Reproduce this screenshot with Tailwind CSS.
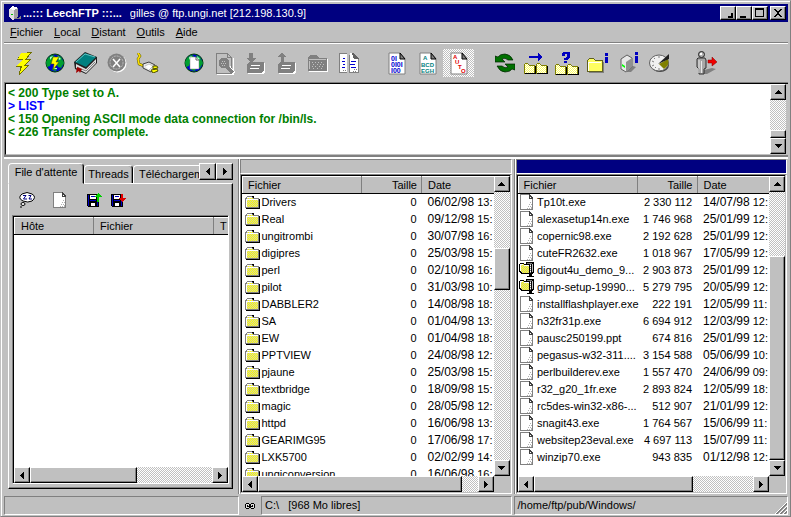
<!DOCTYPE html>
<html lang="fr">
<head>
    <meta charset="UTF-8">
    <meta name="viewport" content="width=device-width, initial-scale=1.0">
    <title>...::: LeechFTP :::...</title>
    <!-- Tailwind CSS CDN -->
    <script src="https://cdn.jsdelivr.net/npm/@tailwindcss/browser@4"></script>
</head>
<body class="h-screen overflow-hidden bg-[#c0c0c0] font-['Liberation_Sans',Arial,sans-serif] text-[11px] leading-[13px] text-black">

    <!-- Shared icons -->
    <svg class="absolute size-0" aria-hidden="true">
        <defs>
            <pattern id="yellow" width="2" height="2" patternUnits="userSpaceOnUse">
                <rect width="2" height="2" fill="#ffff00"/><path d="M1 0h1v1H1zM0 1h1v1H0z" fill="#d0d0b0"/>
            </pattern>
            <pattern id="pale" width="2" height="2" patternUnits="userSpaceOnUse">
                <rect width="2" height="2" fill="#ffff60"/><path d="M0 0h1v1H0zM1 1h1v1H1z" fill="#fff"/>
            </pattern>
        </defs>
        <symbol id="folder" viewBox="0 0 16 16">
            <path d="M1 14V4l2-2h5l2 2h5v10z" fill="#808080"/>
            <path d="M2 13V5l1-1h5l1 1h5v8z" fill="url(#yellow)"/>
            <path d="M2 13V5h1V3h5v1H3v1h11v1H3v7z" fill="#fff"/>
            <path d="M2 14h13V5h1v10H2z" fill="#000"/>
            <path d="M8 2h1l1 1v1H9z" fill="#000"/>
        </symbol>
        <symbol id="file" viewBox="0 0 16 16">
            <path d="M1 0h10l3 4v12H1z" fill="#808080"/>
            <path d="M2 1h8v4h3v10H2z" fill="#fff"/>
            <path d="M10 0l4 4v1h-4z" fill="#404040"/><path d="M11 3h1v1h-1z" fill="#fff"/>
            <path d="M11 8h1v1h-1zM10 10h1v1h-1zM12 10h1v1h-1zM9 12h1v1H9zM11 12h1v1h-1zM8 14h1v1H8zM10 14h1v1h-1zM12 13h1v2h-1z" fill="#b0b0b0"/>
        </symbol>
        <symbol id="zip" viewBox="0 0 16 16">
            <path d="M7 0h7l1 1v10l-2 1v2h2v1H8v-1h2v-2H7z" fill="#000"/>
            <path d="M8 1h5v1H8zM11 2h1v9h-1z" fill="#808080"/><path d="M13 2h1v8h-1z" fill="#c0c0c0"/>
            <path d="M11 3h1v1h-1zM11 5h1v1h-1zM11 7h1v1h-1zM11 9h1v1h-1z" fill="#fff"/>
            <path d="M0 2l1-1h3l1 1h5l1 1v9H3l-3-2z" fill="#000"/>
            <path d="M1 9V2h3l1 1h5v8H4z" fill="url(#yellow)"/>
            <path d="M1 2h3v1H2v7L1 9zM5 3h5v1H5z" fill="#fff"/>
        </symbol>
        <symbol id="globe" viewBox="0 0 20 20">
            <circle cx="10" cy="10" r="9" fill="#0000d0" stroke="#004000" stroke-width="1"/>
            <path d="M3 5l4-3 3 1-2 3 1 3-3 1-1 3-3 1-1-5zM12 2l4 2 3 6-3 5-3-1-2-4 2-3zM8 14l4 1-1 3-4-1z" fill="#00a030"/>
            <path d="M5 4l3-1-3 4zM13 3l3 3-2 1zM9 15h3v1H9z" fill="#b0ffd0"/>
        </symbol>
        <symbol id="bigfolder" viewBox="0 0 12 11">
            <path d="M0 2l1-2h3l1 2h6v9H0z" fill="#808000"/>
            <path d="M1 3V1h3l1 2h5v7H1z" fill="url(#pale)"/>
            <path d="M11 3h1v8H1v-1h10z" fill="#000"/>
        </symbol>
        <symbol id="sheet" viewBox="0 0 18 23">
            <path d="M1 1h11l5 6v15H1z" fill="#fff" stroke="#808080"/>
            <path d="M12 1l5 6h-5z" fill="#808080" stroke="#000"/>
        </symbol>
        <symbol id="up" viewBox="0 0 7 4"><path d="M3 0h1v1h1v1h1v1h1v1H0V3h1V2h1V1h1z"/></symbol>
        <symbol id="down" viewBox="0 0 7 4"><path d="M0 0h7v1H6v1H5v1H4v1H3V3H2V2H1V1H0z"/></symbol>
        <symbol id="left" viewBox="0 0 4 7"><path d="M4 0v7H3V6H2V5H1V4H0V3h1V2h1V1h1V0z"/></symbol>
        <symbol id="right" viewBox="0 0 4 7"><path d="M0 0h1v1h1v1h1v1h1v1H3v1H2v1H1v1H0z"/></symbol>
    </svg>

    <div class="flex h-full flex-col border border-[#c0c0c0] border-r-[#808080] border-b-[#808080] px-[2px] pb-px shadow-[inset_1px_1px_0_#fff]">

        <!-- Title bar -->
        <header class="mt-[3px] ml-px flex h-[18px] shrink-0 items-center bg-[#000080] px-[2px] text-white">
            <svg class="mr-[2px] ml-[2px] h-[14px] w-[13px]" viewBox="0 0 13 14" shape-rendering="crispEdges">
                <path d="M5 12h5l3-2v3H7z" fill="#808080"/>
                <path d="M1 3l4-3 5 2v9l-5 3-4-3z" fill="#e0e0e0"/>
                <path d="M6 4l4-2v9l-4 2z" fill="#a0a0a0"/><path d="M1 3l4-3 5 2-4 2z" fill="#fff"/>
                <path d="M3 8h2v1H3z" fill="#00c000"/>
            </svg>
            <h1 class="font-bold whitespace-pre">...::: LeechFTP :::...</h1>
            <span class="ml-2 flex-1 truncate">gilles @ ftp.ungi.net [212.198.130.9]</span>
            <button aria-label="Réduire dans la barre" class="flex h-[14px] w-4 items-center justify-center border border-white border-r-black border-b-black bg-[#c0c0c0] shadow-[inset_-1px_-1px_0_#808080]">
                <svg class="size-[10px]" viewBox="0 0 10 10"><path d="M8 5h2v5H5V8h3z"/></svg>
            </button>
            <button aria-label="Réduire" class="flex h-[14px] w-4 items-center justify-center border border-white border-r-black border-b-black bg-[#c0c0c0] shadow-[inset_-1px_-1px_0_#808080]">
                <svg class="size-[10px]" viewBox="0 0 10 10"><path d="M1 8h6v2H1z"/></svg>
            </button>
            <button aria-label="Agrandir" class="flex h-[14px] w-4 items-center justify-center border border-white border-r-black border-b-black bg-[#c0c0c0] shadow-[inset_-1px_-1px_0_#808080]">
                <svg class="size-[10px]" viewBox="0 0 10 10"><path d="M0 0h9v9H0zM1 2v6h7V2z" fill-rule="evenodd"/></svg>
            </button>
            <button aria-label="Fermer" class="ml-[2px] flex h-[14px] w-4 items-center justify-center border border-white border-r-black border-b-black bg-[#c0c0c0] shadow-[inset_-1px_-1px_0_#808080]">
                <svg class="size-[10px]" viewBox="0 0 10 10" shape-rendering="crispEdges"><path d="M1 1h2v1h1v1h2V2h1V1h2v1H8v1H7v1H6v2h1v1h1v1h1v1H7V8H6V7H4v1H3v1H1V8h1V7h1V6h1V4H3V3H2V2H1z"/></svg>
            </button>
        </header>

        <!-- Menu -->
        <nav class="ml-px flex h-5 shrink-0 items-center gap-px pl-px">
            <button class="px-[5px]"><u>F</u>ichier</button>
            <button class="px-[5px]"><u>L</u>ocal</button>
            <button class="px-[5px]"><u>D</u>istant</button>
            <button class="px-[5px]"><u>O</u>utils</button>
            <button class="px-[5px]"><u>A</u>ide</button>
        </nav>

        <!-- Toolbar -->
        <div role="toolbar" class="ml-px flex h-10 shrink-0 items-center gap-[15px] border-t border-[#808080] pt-px pl-1 shadow-[inset_0_1px_0_#fff]">
            <div class="flex">
                <button aria-label="Connexion rapide" class="flex h-7 w-[31px] items-center justify-center">
                    <svg class="h-6 w-[18px]" viewBox="0 0 18 24" shape-rendering="crispEdges">
                        <path d="M6 2L17 1l-5 7h4l-6 6h4L4 24l1-8H1l6-7H2z" fill="#707000"/>
                        <path d="M6 2h9l-5 7h4l-6 6h4l-7 7 2-7H2l6-7H3z" fill="#ffff00"/>
                    </svg>
                </button>
                <button aria-label="Connexion" class="flex h-7 w-[31px] items-center justify-center">
                    <svg class="size-5" viewBox="0 0 20 20"><use href="#globe"/>
                        <path d="M8 4h6l-3 5h3l-6 8 1-6H6z" fill="#ffff00" stroke="#404000" stroke-width=".5"/>
                    </svg>
                </button>
                <button aria-label="Signets" class="flex h-7 w-[31px] items-center justify-center">
                    <svg class="size-6" viewBox="0 0 24 24">
                        <path d="M0 11L11 1l12 5v6L12 23 1 18z" fill="#202020"/>
                        <path d="M2 13l10 5 10-10v4L12 22 2 17z" fill="#e0e0e0"/><path d="M3 16l9 4 9-9" stroke="#808080" fill="none"/>
                        <path d="M1 11L11 2l11 4-10 10z" fill="#008080"/>
                        <path d="M2 11L11 3l10 3" stroke="#60c0c0" fill="none"/>
                        <path d="M3 16l5 2-2 4-1-2-3 2z" fill="#a00000"/>
                    </svg>
                </button>
                <button aria-label="Annuler" disabled class="flex h-7 w-[31px] items-center justify-center">
                    <svg class="size-5" viewBox="0 0 20 20">
                        <circle cx="10.500" cy="10.500" r="9" fill="#fff"/><circle cx="9.500" cy="9.500" r="9" fill="#808080"/>
                        <circle cx="9.500" cy="9.500" r="6.500" fill="none" stroke="#c0c0c0" stroke-dasharray="2 1"/>
                        <path d="M6 6l7 8M13 6l-7 8" stroke="#fff" stroke-width="1.500"/>
                    </svg>
                </button>
                <button aria-label="Déconnexion" class="flex h-7 w-[31px] items-center justify-center">
                    <svg class="h-5 w-6" viewBox="0 0 24 20">
                        <path d="M2 0l2 3-2 3 1 5 5 2" stroke="#606000" stroke-width="2.500" fill="none"/>
                        <path d="M2 0l2 3-2 3 1 5 5 2" stroke="#ffe000" stroke-width="1.500" fill="none"/>
                        <path d="M7 11l6-2 6 3v4l-4 3-8-4z" fill="#e8e8e8" stroke="#404040"/>
                        <path d="M9 13l4-2 4 2-4 4" fill="#fff" stroke="#909090" stroke-width=".5"/>
                        <path d="M17 13l4 0 1 2-5 1zM15 17l6-1 1 2-5 2z" fill="#ffff00" stroke="#505000"/>
                    </svg>
                </button>
            </div>
            <div class="flex">
                <button aria-label="Ouvrir une adresse" class="flex h-7 w-[31px] items-center justify-center">
                    <svg class="size-5" viewBox="0 0 20 20"><use href="#globe"/>
                        <path d="M6 4h6l3 3v9H6z" fill="#fff" stroke="#808080" stroke-width=".5"/><path d="M12 4v3h3" fill="none" stroke="#606060"/>
                    </svg>
                </button>
                <button aria-label="Voir" disabled class="flex h-7 w-[31px] items-center justify-center">
                    <svg class="h-[23px] w-5" viewBox="0 0 20 23" shape-rendering="crispEdges">
                        <path d="M18 6v16H2" fill="none" stroke="#fff"/><path d="M1 1h11l4 4v16H1z" fill="none" stroke="#808080"/>
                        <path d="M12 1v4h4" fill="none" stroke="#808080"/>
                        <circle cx="9" cy="11" r="5.500" fill="#808080"/><path d="M7 9h1v1H7zM9 9h1v1H9zM6 11h1v1H6zM8 11h1v1H8zM10 11h1v1h-1zM7 13h1v1H7zM9 13h1v1H9z" fill="#c0c0c0"/>
                        <path d="M14 15l5 6" stroke="#fff" stroke-width="3"/><path d="M12 15l6 6" stroke="#808080" stroke-width="3"/>
                    </svg>
                </button>
                <button aria-label="Télécharger" disabled class="flex h-7 w-[31px] items-center justify-center">
                    <svg class="h-[22px] w-5" viewBox="0 0 20 22" shape-rendering="crispEdges">
                        <path d="M2 14l3-3h14v9l-2 2H2z" fill="#fff"/>
                        <path d="M3 1h4v5h3l-5 5-5-5h3zM1 12l3-2h14v8l-3 3H1z" fill="#808080"/>
                        <path d="M5 13h9v1H5zM4 16h9v1H4z" fill="#fff"/>
                    </svg>
                </button>
                <button aria-label="Envoyer" disabled class="flex h-7 w-[31px] items-center justify-center">
                    <svg class="h-[22px] w-5" viewBox="0 0 20 22" shape-rendering="crispEdges">
                        <path d="M2 14l3-3h14v9l-2 2H2z" fill="#fff"/>
                        <path d="M5 0l4 5H7v6H4V5H1zM1 12l3-2h14v8l-3 3H1z" fill="#808080"/>
                        <path d="M5 13h9v1H5zM4 16h9v1H4z" fill="#fff"/>
                    </svg>
                </button>
                <button aria-label="Nouveau dossier" disabled class="flex h-7 w-[31px] items-center justify-center">
                    <svg class="h-[18px] w-[22px]" viewBox="0 0 22 18" shape-rendering="crispEdges">
                        <path d="M2 5h19v13H2z" fill="#fff"/><path d="M1 4l2-3h7l2 3h8v13H1z" fill="#808080"/>
                        <path d="M2 5h17v1H2zM2 15V7h1v8z" fill="#c0c0c0"/>
                        <path d="M5 8h1v1H5zM8 8h1v1H8zM11 8h1v1h-1zM14 8h1v1h-1zM6 10h1v1H6zM10 10h1v1h-1zM13 10h1v1h-1zM16 10h1v1h-1zM5 12h1v1H5zM8 12h1v1H8zM12 12h1v1h-1zM15 12h1v1h-1zM6 14h1v1H6zM10 14h1v1h-1zM14 14h1v1h-1z" fill="#c0c0c0"/>
                    </svg>
                </button>
                <button aria-label="Comparer" class="flex h-7 w-[31px] items-center justify-center">
                    <svg class="h-[22px] w-5" viewBox="0 0 20 22" shape-rendering="crispEdges">
                        <path d="M0 1h8v20H0z" fill="#fff"/><path d="M0 1h8v1H0zM0 1h1v20H0zM0 20h8v1H0z" fill="#808080"/>
                        <path d="M11 1h4l5 6v14h-9z" fill="#fff"/><path d="M10 3h1v18h-1zM19 7h1v14h-1zM11 20h8v1h-8z" fill="#808080"/>
                        <path d="M13 1h2l5 6h-5z" fill="#606060"/>
                        <path d="M4 6h2v1H4zM3 9h3v1H3zM4 12h2v1H4zM3 15h3v1H3zM12 9h5v1h-5zM11 12h5v1h-5zM12 15h5v1h-5z" fill="#0000d0"/>
                        <path d="M15 17h1v1h-1zM17 17h1v1h-1zM14 19h1v1h-1zM16 19h1v1h-1zM4 18h1v1H4zM6 18h1v1H6z" fill="#808080"/>
                    </svg>
                </button>
            </div>
            <div class="flex pl-[2px]">
                <button aria-label="Mode binaire" class="flex h-7 w-[31px] items-center justify-center">
                    <svg class="h-[23px] w-[18px]" viewBox="0 0 18 23"><use href="#sheet"/>
                        <g fill="#0000d0" font-size="7" font-weight="bold"><text x="3" y="9">0I</text><text x="3" y="15">0I0I</text><text x="3" y="21">I00</text></g>
                    </svg>
                </button>
                <button aria-label="Mode texte" class="flex h-7 w-[31px] items-center justify-center">
                    <svg class="h-[23px] w-[18px]" viewBox="0 0 18 23"><use href="#sheet"/>
                        <g fill="#008080" font-size="6" font-weight="bold"><text x="4" y="8">A</text><text x="2" y="15">BCD</text><text x="2" y="21">EGH</text></g>
                    </svg>
                </button>
                <button aria-label="Mode automatique" aria-pressed="true" class="flex h-7 w-[31px] items-center justify-center bg-[repeating-conic-gradient(#fff_0_25%,#c0c0c0_0_50%)] bg-[length:2px_2px]">
                    <svg class="h-[23px] w-[18px]" viewBox="0 0 18 23"><use href="#sheet"/>
                        <g fill="#e00000" font-size="6" font-weight="bold"><text x="3" y="7">A</text><text x="5" y="12">U</text><text x="8" y="17">T</text><text x="11" y="21">O</text></g>
                    </svg>
                </button>
            </div>
            <div class="flex">
                <button aria-label="Actualiser" class="flex h-7 w-[31px] items-center justify-center">
                    <svg class="size-5" viewBox="0 0 20 20">
                        <path d="M0 3l3 1q2-3 7-3 5 0 8 6h-5q-3-3-6-1l3 3H0zM20 17l-3-1q-2 3-7 3-5 0-8-6h5q3 3 6 1l-3-3h10z" fill="#007000" stroke="#002000" stroke-width=".7"/>
                    </svg>
                </button>
                <button aria-label="Transférer le dossier" class="flex h-7 w-[31px] items-center justify-center">
                    <svg class="h-[22px] w-6" viewBox="0 0 24 22" shape-rendering="crispEdges">
                        <path d="M5 4h9V1l5 4-5 4V6H5z" fill="#0000c0"/>
                        <use href="#bigfolder" x="0" y="11" width="12" height="11"/><use href="#bigfolder" x="12" y="11" width="12" height="11"/>
                    </svg>
                </button>
                <button aria-label="Comparer les dossiers" class="flex h-7 w-[31px] items-center justify-center">
                    <svg class="h-[23px] w-6" viewBox="0 0 24 23" shape-rendering="crispEdges">
                        <path d="M8 0h6l1 1v4l-3 3H9V6h2l1-2V2h-2v2H7V1zM9 9h3v2H9z" fill="#0000c0"/>
                        <use href="#bigfolder" x="0" y="12" width="12" height="11"/><use href="#bigfolder" x="12" y="12" width="12" height="11"/>
                    </svg>
                </button>
                <button aria-label="Infos dossier" class="flex h-7 w-[31px] items-center justify-center">
                    <svg class="h-5 w-[22px]" viewBox="0 0 22 20" shape-rendering="crispEdges">
                        <path d="M2 18h14V9h1v11H2z" fill="#808080"/>
                        <path d="M0 7l2-2h4l2 2h8v12H0z" fill="#606020"/><path d="M1 8V7l1-1h4l2 2h7v10H1z" fill="#ffff60"/>
                        <path d="M1 9h13v1H2v8H1z" fill="#fff"/>
                        <path d="M18 0h3v3h-3zM18 4h3v6h-3z" fill="#0000c0"/>
                    </svg>
                </button>
                <button aria-label="Infos serveur" class="flex h-7 w-[31px] items-center justify-center">
                    <svg class="h-[22px] w-5" viewBox="0 0 20 22">
                        <path d="M6 19l8-5 3 1-5 5H7z" fill="#808080"/>
                        <path d="M2 7l6-4 5 3v9l-6 5-5-3z" fill="#e8e8e8" stroke="#606060"/><path d="M7 10l6-4v9l-6 5z" fill="#909090"/>
                        <path d="M3 12l3 2v2l-3-2z" fill="#00ff00"/><path d="M16 0h3v3h-3zM16 4h3v7h-3z" fill="#0000c0"/>
                    </svg>
                </button>
                <button aria-label="Vitesse" class="flex h-7 w-[31px] items-center justify-center">
                    <svg class="h-5 w-[22px]" viewBox="0 0 22 20">
                        <ellipse cx="11" cy="12" rx="9" ry="7" fill="#404040"/>
                        <ellipse cx="10" cy="10" rx="9.500" ry="8" fill="#f0f0f0" stroke="#606060"/>
                        <path d="M10 11l9-5q2 6-4 10z" fill="#808000"/><path d="M9 11L20 1v5z" fill="#202020"/>
                        <path d="M10 3v2M3 8l2 1M3 13l2-1M5 5l1 1M10 15v2M6 15l1-1" stroke="#808080"/>
                    </svg>
                </button>
            </div>
            <button aria-label="Quitter" class="flex h-7 w-[31px] items-center justify-center">
                <svg class="h-6 w-6" viewBox="0 0 24 24">
                    <path d="M10 19l8-2 4 1-9 5H9z" fill="#808080"/>
                    <path d="M4 7h7l1 2v8l-2 1v5H5v-5l-2-2V8z" fill="#a8a8a8" stroke="#303030"/>
                    <path d="M5 9v13M7.500 10v12" stroke="#e8e8e8"/><circle cx="7.500" cy="3.500" r="3" fill="#b0b0b0" stroke="#202020"/><path d="M6 2h2v2H6z" fill="#fff"/>
                    <path d="M14 9h4V6l5 5-5 4v-3h-4z" fill="#f00000" stroke="#800000" stroke-width=".5"/>
                </svg>
            </button>
        </div>

        <!-- Server log -->
        <section class="ml-px flex h-[73px] shrink-0 border-t border-l border-[#808080] border-b-white">
            <div class="flex flex-1 border-t border-b border-l border-black border-b-[#c0c0c0]">
                <div role="log" class="flex-1 bg-white pt-[3px] pl-[2px] text-[12px] leading-[13px] font-bold text-[#008000]">
                    <p>&lt; 200 Type set to A.</p>
                    <p class="text-[#0000ff]">&gt; LIST</p>
                    <p>&lt; 150 Opening ASCII mode data connection for /bin/ls.</p>
                    <p>&lt; 226 Transfer complete.</p>
                </div>
                <div class="mr-[2px] flex w-4 flex-col bg-[repeating-conic-gradient(#fff_0_25%,#c0c0c0_0_50%)] bg-[length:2px_2px]">
                    <button aria-label="Haut" class="flex h-4 shrink-0 items-center justify-center border border-white border-r-black border-b-black bg-[#c0c0c0] shadow-[inset_-1px_-1px_0_#808080]"><svg class="h-1 w-[7px]"><use href="#up"/></svg></button>
                    <div class="mt-auto h-2 border border-white border-r-black border-b-black bg-[#c0c0c0] shadow-[inset_-1px_-1px_0_#808080]"></div>
                    <button aria-label="Bas" class="flex h-4 shrink-0 items-center justify-center border border-white border-r-black border-b-black bg-[#c0c0c0] shadow-[inset_-1px_-1px_0_#808080]"><svg class="h-1 w-[7px]"><use href="#down"/></svg></button>
                </div>
            </div>
        </section>
        <div class="ml-px h-1 shrink-0 border-t-2 border-b-2 border-[#808080] border-b-white"></div>

        <!-- Three panes -->
        <main class="ml-px flex min-h-0 flex-1 pr-px">

            <!-- Queue -->
            <section class="flex w-[236px] shrink-0 flex-col border-r border-white pt-1 pr-[2px] pb-[5px] pl-1 shadow-[inset_-1px_0_0_#808080]">
                <div role="tablist" class="flex h-5 w-[225px] items-end">
                    <button role="tab" aria-selected="true" class="relative z-10 -mb-px h-[21px] w-[76px] shrink-0 rounded-t-sm border border-white border-r-black border-b-[#c0c0c0] bg-[#c0c0c0] pb-[2px] shadow-[inset_-1px_0_0_#808080]">File d'attente</button>
                    <button role="tab" class="h-[18px] w-[49px] shrink-0 rounded-t-sm border border-b-0 border-white border-r-black shadow-[inset_-1px_0_0_#808080]">Threads</button>
                    <button role="tab" class="h-[18px] min-w-0 flex-1 overflow-hidden rounded-tl-sm border-t border-l border-white pl-[5px] text-left whitespace-nowrap">Téléchargement</button>
                    <div class="flex self-start">
                        <button aria-label="Onglet précédent" class="flex h-[17px] w-[17px] items-center justify-center border border-white border-r-black border-b-black bg-[#c0c0c0] shadow-[inset_-1px_-1px_0_#808080]"><svg class="h-[7px] w-1"><use href="#left"/></svg></button>
                        <button aria-label="Onglet suivant" class="flex h-[17px] w-[17px] items-center justify-center border border-white border-r-black border-b-black bg-[#c0c0c0] shadow-[inset_-1px_-1px_0_#808080]"><svg class="h-[7px] w-1"><use href="#right"/></svg></button>
                    </div>
                </div>
                <div class="flex w-[225px] min-h-0 flex-1 flex-col border border-white border-r-black border-b-black px-[3px] pb-1 shadow-[inset_-1px_-1px_0_#808080]">
                    <div class="flex h-[31px] shrink-0 items-center pl-[7px]">
                        <button aria-label="Pause">
                            <svg class="size-4" viewBox="0 0 16 16">
                                <path d="M3 2q5-3 10 0 5 3 0 7-4 2-9 0-6-3-1-7z" fill="#fff" stroke="#000"/><ellipse cx="4" cy="12" rx="2" ry="1.500" fill="#fff" stroke="#000"/><path d="M1 15h2" stroke="#000"/>
                                <path d="M4 3.500h3L4.500 7H8M9.500 3.500H12L10 7h3" stroke="#000080" fill="none"/>
                            </svg>
                        </button>
                        <button aria-label="Vider" class="ml-[17px]"><svg class="size-4" shape-rendering="crispEdges"><use href="#file"/></svg></button>
                        <button aria-label="Charger la file" class="ml-[18px]">
                            <svg class="size-4" viewBox="0 0 16 16" shape-rendering="crispEdges"><path d="M1 2h12v13H2l-1-1z"/><path d="M2 3h1v11H2zM11 8h1v6h-1zM4 8h6v1H4z" fill="#0000c0"/><path d="M4 3h6v4H4zM5 11h4v3H5z" fill="#fff"/><path d="M5 4h4v1H5z" fill="#0000c0"/><path d="M12 1h1v1h1v1h1v1h1v1h-3v5h-2V5H9V4h1V3h1V2h1z" fill="#00d000"/></svg>
                        </button>
                        <button aria-label="Enregistrer la file" class="ml-2">
                            <svg class="size-4" viewBox="0 0 16 16" shape-rendering="crispEdges"><path d="M1 2h12v13H2l-1-1z"/><path d="M2 3h1v11H2zM11 9h1v5h-1zM4 8h6v1H4z" fill="#0000c0"/><path d="M4 3h6v4H4zM5 11h4v3H5z" fill="#fff"/><path d="M5 4h4v1H5z" fill="#0000c0"/><path d="M11 2h2v4h3v1h-1v1h-1v1h-1v1h-1V9h-1V8h-1V7H9V6h2z" fill="#e00000"/></svg>
                        </button>
                    </div>
                    <div class="flex min-h-0 flex-1 flex-col border border-[#808080] border-r-white border-b-white">
                        <div class="flex min-h-0 flex-1 flex-col border-t border-l border-black bg-white">
                            <table class="w-full table-fixed">
                                <thead>
                                    <tr class="h-[17px] bg-[#c0c0c0] text-left">
                                        <th class="w-[79px] border border-white border-r-[#808080] border-b-black p-0 pl-[6px] font-normal">Hôte</th>
                                        <th class="w-[120px] border border-white border-r-[#808080] border-b-black p-0 pl-[6px] font-normal">Fichier</th>
                                        <th class="overflow-hidden border border-r-0 border-white border-b-black p-0 pl-[6px] font-normal">T</th>
                                    </tr>
                                </thead>
                            </table>
                            <div class="mt-auto flex h-4 shrink-0 bg-[repeating-conic-gradient(#fff_0_25%,#c0c0c0_0_50%)] bg-[length:2px_2px]">
                                <button aria-label="Gauche" class="flex w-4 shrink-0 items-center justify-center border border-white border-r-black border-b-black bg-[#c0c0c0] shadow-[inset_-1px_-1px_0_#808080]"><svg class="h-[7px] w-1"><use href="#left"/></svg></button>
                                <div class="w-[107px] border border-white border-r-black border-b-black bg-[#c0c0c0] shadow-[inset_-1px_-1px_0_#808080]"></div>
                                <button aria-label="Droite" class="ml-auto flex w-4 shrink-0 items-center justify-center border border-white border-r-black border-b-black bg-[#c0c0c0] shadow-[inset_-1px_-1px_0_#808080]"><svg class="h-[7px] w-1"><use href="#right"/></svg></button>
                            </div>
                        </div>
                    </div>
                </div>
            </section>

            <!-- Local files -->
            <section class="flex min-w-0 flex-1 flex-col border-r border-[#808080] pr-[2px]">
                <div class="h-[15px] shrink-0 border border-[#808080] border-r-white border-b-white"></div>
                <div class="flex min-h-0 flex-1 flex-col border border-[#808080] border-r-white border-b-white pr-px pb-px">
                    <div class="flex min-h-0 flex-1 flex-col border-t border-l border-black">
                        <div class="flex min-h-0 flex-1">
                            <div class="min-w-0 flex-1 overflow-hidden bg-white">
                                <table class="w-full table-fixed">
                                    <thead>
                                        <tr class="h-[17px] bg-[#c0c0c0] text-left">
                                            <th class="w-[119px] border border-white border-r-[#808080] border-b-black p-0 pl-[5px] font-normal">Fichier</th>
                                            <th class="w-[60px] border border-white border-r-[#808080] border-b-black p-0 pr-1 text-right font-normal">Taille</th>
                                            <th class="border border-r-0 border-white border-b-black p-0 pl-[6px] font-normal">Date</th>
                                        </tr>
                                    </thead>
                                    <tbody id="local-files"></tbody>
                                </table>
                            </div>
                            <div class="flex w-4 shrink-0 flex-col bg-[repeating-conic-gradient(#fff_0_25%,#c0c0c0_0_50%)] bg-[length:2px_2px]">
                                <button aria-label="Haut" class="flex h-4 shrink-0 items-center justify-center border border-white border-r-black border-b-black bg-[#c0c0c0] shadow-[inset_-1px_-1px_0_#808080]"><svg class="h-1 w-[7px]"><use href="#up"/></svg></button>
                                <div class="mt-14 h-[42px] border border-white border-r-black border-b-black bg-[#c0c0c0] shadow-[inset_-1px_-1px_0_#808080]"></div>
                                <button aria-label="Bas" class="mt-auto flex h-4 shrink-0 items-center justify-center border border-white border-r-black border-b-black bg-[#c0c0c0] shadow-[inset_-1px_-1px_0_#808080]"><svg class="h-1 w-[7px]"><use href="#down"/></svg></button>
                            </div>
                        </div>
                        <div class="mr-4 flex h-4 shrink-0 bg-[repeating-conic-gradient(#fff_0_25%,#c0c0c0_0_50%)] bg-[length:2px_2px]">
                            <button aria-label="Gauche" class="flex w-4 shrink-0 items-center justify-center border border-white border-r-black border-b-black bg-[#c0c0c0] shadow-[inset_-1px_-1px_0_#808080]"><svg class="h-[7px] w-1"><use href="#left"/></svg></button>
                            <div class="mr-4 flex-1 border border-white border-r-black border-b-black bg-[#c0c0c0] shadow-[inset_-1px_-1px_0_#808080]"></div>
                            <button aria-label="Droite" class="flex w-4 shrink-0 items-center justify-center border border-white border-r-black border-b-black bg-[#c0c0c0] shadow-[inset_-1px_-1px_0_#808080]"><svg class="h-[7px] w-1"><use href="#right"/></svg></button>
                        </div>
                    </div>
                </div>
            </section>

            <!-- Remote files -->
            <section class="flex min-w-0 flex-1 flex-col border-l border-white">
                <div class="h-[15px] shrink-0 border border-[#808080] border-r-white border-b-white bg-[#000080]"></div>
                <div class="flex min-h-0 flex-1 flex-col border border-[#808080] border-r-white border-b-white pr-px pb-px">
                    <div class="flex min-h-0 flex-1 flex-col border-t border-l border-black">
                        <div class="flex min-h-0 flex-1">
                            <div class="min-w-0 flex-1 overflow-hidden bg-white">
                                <table class="w-full table-fixed">
                                    <thead>
                                        <tr class="h-[17px] bg-[#c0c0c0] text-left">
                                            <th class="w-[119px] border border-white border-r-[#808080] border-b-black p-0 pl-[5px] font-normal">Fichier</th>
                                            <th class="w-[60px] border border-white border-r-[#808080] border-b-black p-0 pr-1 text-right font-normal">Taille</th>
                                            <th class="border border-r-0 border-white border-b-black p-0 pl-[6px] font-normal">Date</th>
                                        </tr>
                                    </thead>
                                    <tbody id="remote-files"></tbody>
                                </table>
                            </div>
                            <div class="flex w-4 shrink-0 flex-col bg-[repeating-conic-gradient(#fff_0_25%,#c0c0c0_0_50%)] bg-[length:2px_2px]">
                                <button aria-label="Haut" class="flex h-4 shrink-0 items-center justify-center border border-white border-r-black border-b-black bg-[#c0c0c0] shadow-[inset_-1px_-1px_0_#808080]"><svg class="h-1 w-[7px]"><use href="#up"/></svg></button>
                                <div class="mt-16 flex-1 border border-white border-r-black border-b-black bg-[#c0c0c0] shadow-[inset_-1px_-1px_0_#808080]"></div>
                                <button aria-label="Bas" class="flex h-4 shrink-0 items-center justify-center border border-white border-r-black border-b-black bg-[#c0c0c0] shadow-[inset_-1px_-1px_0_#808080]"><svg class="h-1 w-[7px]"><use href="#down"/></svg></button>
                            </div>
                        </div>
                        <div class="mr-4 flex h-4 shrink-0 bg-[repeating-conic-gradient(#fff_0_25%,#c0c0c0_0_50%)] bg-[length:2px_2px]">
                            <button aria-label="Gauche" class="flex w-4 shrink-0 items-center justify-center border border-white border-r-black border-b-black bg-[#c0c0c0] shadow-[inset_-1px_-1px_0_#808080]"><svg class="h-[7px] w-1"><use href="#left"/></svg></button>
                            <div class="w-[159px] border border-white border-r-black border-b-black bg-[#c0c0c0] shadow-[inset_-1px_-1px_0_#808080]"></div>
                            <button aria-label="Droite" class="ml-auto flex w-4 shrink-0 items-center justify-center border border-white border-r-black border-b-black bg-[#c0c0c0] shadow-[inset_-1px_-1px_0_#808080]"><svg class="h-[7px] w-1"><use href="#right"/></svg></button>
                        </div>
                    </div>
                </div>
            </section>
        </main>

        <!-- Status bar -->
        <footer class="mt-[2px] ml-px flex h-[19px] shrink-0">
            <div class="w-[235px] shrink-0 border border-[#808080] border-r-white border-b-white"></div>
            <div class="flex min-w-0 flex-1 items-center">
                <svg class="mx-[6px] h-[6px] w-[10px] shrink-0" viewBox="0 0 10 6" shape-rendering="crispEdges"><path d="M1 0h3v1h2V0h3v1h1v4H9v1H6V5H4v1H1V5H0V1h1z"/><path d="M1 1h3v4H1zM6 1h3v4H6z" fill="#e0e0e0"/><path d="M2 2h1v2H2zM7 2h1v2H7zM3 3h4v1H3z"/></svg>
                <div class="mr-[2px] flex-1 self-stretch border border-[#808080] border-r-white border-b-white pt-[2px] pl-[3px] whitespace-pre">C:\   [968 Mo libres]</div>
            </div>
            <div class="flex min-w-0 flex-1">
                <div class="flex flex-1 justify-between border border-[#808080] border-r-white border-b-white pl-[3px]">
                    <span class="pt-[2px]">/home/ftp/pub/Windows/</span>
                    <svg class="size-3 self-end" viewBox="0 0 12 12"><path d="M0 12L12 0M4 12l8-8M8 12l4-4" stroke="#fff"/><path d="M1 12L12 1M2 12L12 2M5 12l7-7M6 12l6-6M9 12l3-3M10 12l2-2" stroke="#808080"/></svg>
                </div>
            </div>
        </footer>
    </div>

    <script>
        const localFiles = [
            ["Drivers", "06/02/98", "13:"],
            ["Real", "09/12/98", "15:"],
            ["ungitrombi", "30/07/98", "16:"],
            ["digipres", "25/03/98", "15:"],
            ["perl", "02/10/98", "16:"],
            ["pilot", "31/03/98", "10:"],
            ["DABBLER2", "14/08/98", "18:"],
            ["SA", "01/04/98", "13:"],
            ["EW", "01/04/98", "18:"],
            ["PPTVIEW", "24/08/98", "12:"],
            ["pjaune", "25/03/98", "15:"],
            ["textbridge", "18/09/98", "15:"],
            ["magic", "28/05/98", "12:"],
            ["httpd", "16/06/98", "13:"],
            ["GEARIMG95", "17/06/98", "17:"],
            ["LXK5700", "02/02/99", "14:"],
            ["ungiconversion", "16/06/98", "16:"]
        ].map(([name, date, time]) => ({ icon: "folder", name, size: "0", date, time }));

        const remoteFiles = [
            { icon: "file", name: "Tp10t.exe", size: "2 330 112", date: "14/07/98", time: "12:" },
            { icon: "file", name: "alexasetup14n.exe", size: "1 746 968", date: "25/01/99", time: "12:" },
            { icon: "file", name: "copernic98.exe", size: "2 192 628", date: "25/01/99", time: "12:" },
            { icon: "file", name: "cuteFR2632.exe", size: "1 018 967", date: "17/05/99", time: "12:" },
            { icon: "zip", name: "digout4u_demo_9...", size: "2 903 873", date: "25/01/99", time: "12:" },
            { icon: "zip", name: "gimp-setup-19990...", size: "5 279 795", date: "20/05/99", time: "12:" },
            { icon: "file", name: "installflashplayer.exe", size: "222 191", date: "12/05/99", time: "11:" },
            { icon: "file", name: "n32fr31p.exe", size: "6 694 912", date: "12/03/99", time: "12:" },
            { icon: "file", name: "pausc250199.ppt", size: "674 816", date: "25/01/99", time: "12:" },
            { icon: "file", name: "pegasus-w32-311....", size: "3 154 588", date: "05/06/99", time: "10:" },
            { icon: "file", name: "perlbuilderev.exe", size: "1 557 470", date: "24/06/99", time: "09:" },
            { icon: "file", name: "r32_g20_1fr.exe", size: "2 893 824", date: "12/05/99", time: "18:" },
            { icon: "file", name: "rc5des-win32-x86-...", size: "512 907", date: "21/01/99", time: "12:" },
            { icon: "file", name: "snagit43.exe", size: "1 764 567", date: "15/06/99", time: "11:" },
            { icon: "file", name: "websitep23eval.exe", size: "4 697 113", date: "15/07/99", time: "11:" },
            { icon: "file", name: "winzip70.exe", size: "943 835", date: "01/12/98", time: "12:" }
        ];

        function fillTable(id, files) {
            document.getElementById(id).innerHTML = files.map(file => `
                <tr class="h-[17px]">
                    <td class="p-0 pl-px">
                        <div class="flex items-center gap-[2px] whitespace-nowrap">
                            <svg class="size-4 shrink-0" shape-rendering="crispEdges"><use href="#${file.icon}"/></svg>
                            <span>${file.name}</span>
                        </div>
                    </td>
                    <td class="p-0 pr-[5px] text-right whitespace-nowrap">${file.size}</td>
                    <td class="p-0 pl-[6px]">
                        <div class="flex items-baseline gap-[3px]"><span class="text-[12px]">${file.date}</span><span>${file.time}</span></div>
                    </td>
                </tr>
            `).join("");
        }

        fillTable("local-files", localFiles);
        fillTable("remote-files", remoteFiles);
    </script>
</body>
</html>
